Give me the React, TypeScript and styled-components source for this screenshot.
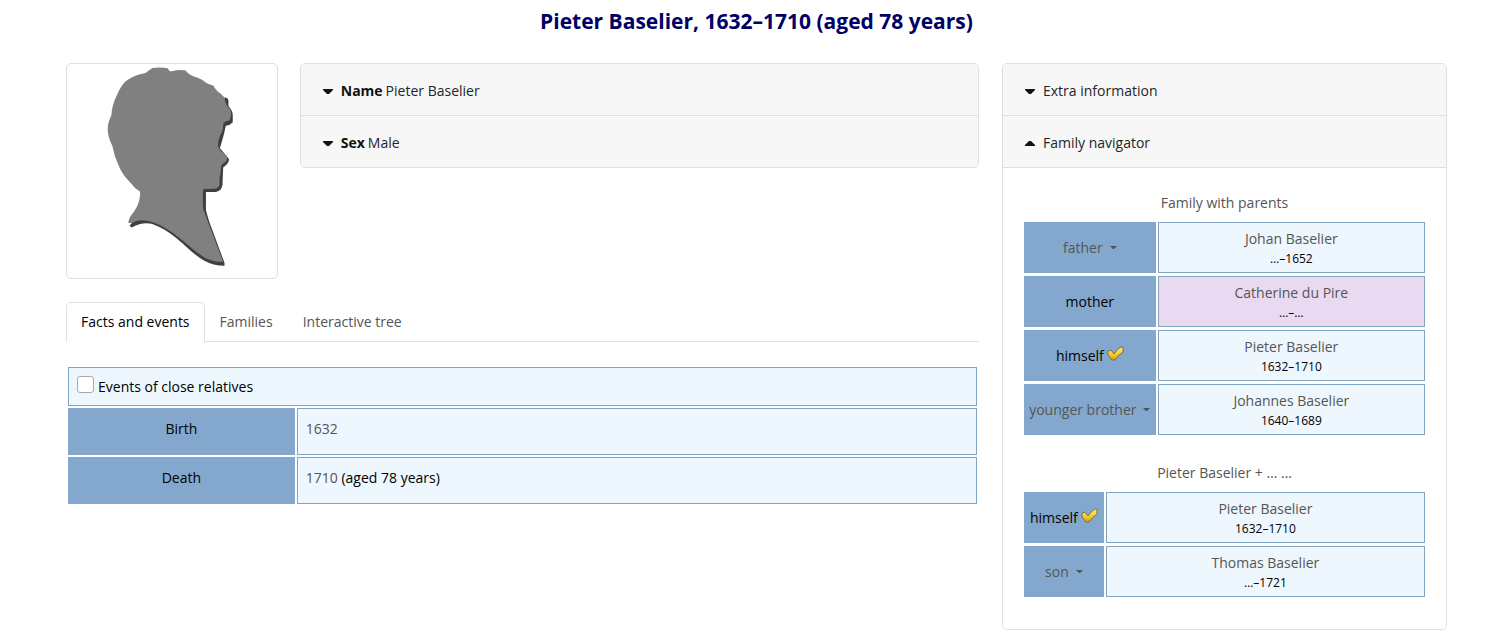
import React, { useState } from "react";
import styled, { createGlobalStyle } from "styled-components";

const GlobalStyle = createGlobalStyle`
  *, *::before, *::after { box-sizing: border-box; }
  body {
    margin: 0;
    background: #fff;
    color: #000;
    font-family: "Open Sans", "Noto Sans", sans-serif;
    font-size: 14px;
    line-height: 22px;
  }
  button, input { font: inherit; }
`;

const Page = styled.main`
  padding: 5px 53px 0 66px;
`;

const Title = styled.h1`
  margin: 0 0 26px;
  color: #000066;
  font-size: 21px;
  font-weight: 700;
  line-height: 32px;
  text-align: center;
`;

const Columns = styled.div`
  display: grid;
  grid-template-columns: repeat(12, minmax(0, 1fr));
  gap: 23px;
  align-items: start;
`;

const MainColumn = styled.div`
  grid-column: span 8;
`;

const Sidebar = styled.aside`
  grid-column: span 4;
`;

const Summary = styled.div`
  display: grid;
  grid-template-columns: repeat(4, minmax(0, 1fr));
  gap: 22px;
  align-items: start;
  margin-bottom: 23px;
`;

const Portrait = styled.div`
  border: 1px solid #dfdfdf;
  border-radius: 5px;

  svg { display: block; width: 100%; }
`;

const Accordion = styled.div`
  grid-column: span 3;
  border: 1px solid #dfdfdf;
  border-radius: 5px;
  overflow: hidden;
`;

const AccordionHeader = styled.h2`
  margin: 0;
  font-size: 14px;
  font-weight: 400;

  & + & { border-top: 1px solid #dfdfdf; }
`;

const AccordionButton = styled.button`
  display: flex;
  align-items: center;
  width: 100%;
  padding: 16px 22px 13px;
  border: 0;
  background: #f7f7f7;
  color: #212529;
  text-align: left;
  line-height: 22px;
  cursor: pointer;

  b { margin-right: 3px; color: #111; }
`;

const Arrow = styled.svg`
  flex: none;
  margin-right: 8px;
`;

const NavigatorBody = styled.div`
  padding: 21px 19px 29px;
  border-top: 1px solid #dfdfdf;
`;

const TabBar = styled.div`
  display: flex;
  border-bottom: 1px solid #dfdfdf;
  margin-bottom: 23px;
`;

const Tab = styled.button<{ $active: boolean }>`
  margin-bottom: -1px;
  padding: 8px 14px;
  border: 1px solid ${(p) => (p.$active ? "#dfdfdf" : "transparent")};
  border-bottom-color: ${(p) => (p.$active ? "#fff" : "transparent")};
  border-radius: 5px 5px 0 0;
  background: ${(p) => (p.$active ? "#fff" : "transparent")};
  color: ${(p) => (p.$active ? "#000" : "#555")};
  cursor: pointer;
`;

const Table = styled.table`
  width: 100%;
  border-collapse: separate;
  border-spacing: 2px;
`;

const PeopleTable = styled(Table)`
  border-spacing: 2px 3px;

  & + & { margin-top: 21px; }
`;

const Caption = styled.caption`
  padding: 3px 0 5px;
  color: #555;
`;

const LabelCell = styled.th<{ $width: string }>`
  width: ${(p) => p.$width};
  padding: 4px;
  border: 1px solid #84a8cd;
  background: #84a8cd;
  font-weight: 400;
  text-align: center;
  white-space: nowrap;
`;

const PersonCell = styled.td<{ $female?: boolean }>`
  padding: 6px 4px 3px;
  border: 1px solid #81a4c0;
  background: ${(p) => (p.$female ? "#e9daf1" : "#edf7fd")};
  text-align: center;
  line-height: 20px;
`;

const FactLabel = styled(LabelCell)`
  height: 47px;
  padding: 9px 8px;
  vertical-align: top;
`;

const FactCell = styled.td`
  padding: 9px 8px;
  border: 1px solid #81a4c0;
  background: #edf7fd;
  vertical-align: top;
`;

const OptionCell = styled(FactCell)`
  padding: 8px;
`;

const Link = styled.a`
  color: #555;
  text-decoration: none;
`;

const Years = styled.div`
  font-size: 12px;
`;

const MenuButton = styled.button`
  display: inline-flex;
  align-items: center;
  gap: 7px;
  padding: 0;
  border: 0;
  background: none;
  color: #555;
  cursor: pointer;
`;

const Self = styled.span`
  display: inline-flex;
  align-items: center;
  gap: 3px;

  svg { margin-bottom: 3px; }
`;

const RelativesLabel = styled.label`
  display: flex;
  align-items: center;
  gap: 4px;
  line-height: 21px;
`;

const Checkbox = styled.input`
  appearance: none;
  width: 17px;
  height: 17px;
  margin: 0 0 4px;
  border: 1px solid #a9a9a9;
  border-radius: 3px;
  background: #fff;

  &:checked { background: #84a8cd; }
`;

function Silhouette() {
  return (
    <svg viewBox="18 27 634 648" role="img" aria-label="Male silhouette">
      <path
        fill="#3f3f3f"
        d="M494 128 Q505 128 506 138 L506 154 Q519 168 519 182 L519 203 Q512 212 498 214 Q493 240 486 262 L480 282 L500 304 L508 316 Q507 328 490 340 L488 392 Q486 410 468 414 L438 414 L438 470 L448 504 L494 628 L494 637 Q460 637 432 621 C380 591 345 534 274 510 Q245 504 214 521 L207 516 L230 490 L420 380 Z"
      />
      <path
        fill="#808080"
        d="M255 54 Q266 46 276 39 Q301 36 322 40 Q326 50 335 49 Q357 42 377 47 Q386 60 400 64 Q428 72 438 84 Q450 90 460 92 Q470 110 482 116 L494 128 Q495 144 502 154 Q513 162 514 172 Q514 192 508 198 Q492 200 490 210 Q490 230 482 240 Q472 260 476 280 Q482 290 500 304 Q504 314 498 322 Q486 328 483 338 Q484 360 479 370 L479 392 Q476 404 462 404 L430 405 Q427 440 430 466 L444 504 L490 625 Q462 626 438 614 C390 588 345 528 278 505 Q238 492 213 508 L203 507 Q206 488 220 474 Q240 446 239 413 Q222 403 212 388 Q184 360 175 336 Q160 305 155 274 Q142 250 141 225 Q141 205 152 182 Q154 150 168 123 Q184 84 204 73 Q228 58 255 54 Z"
      />
    </svg>
  );
}

function Check() {
  return (
    <svg width="17" height="16" viewBox="0 0 17 16" aria-hidden="true">
      <defs>
        <linearGradient id="gold" x1="0" y1="0" x2="0" y2="1">
          <stop offset="0" stopColor="#ffe978" />
          <stop offset="0.6" stopColor="#f6cb26" />
          <stop offset="1" stopColor="#dc9a10" />
        </linearGradient>
      </defs>
      <path
        d="M1 5 L4 4 L7 8 Q10 3 14 1 L16 1 L16 6 Q11 9 8 14 L5 14 Q3 11 1 9 Z"
        fill="url(#gold)"
        stroke="#79704f"
        strokeLinejoin="round"
      />
    </svg>
  );
}

function Triangle({ up }: { up?: boolean }) {
  return (
    <Arrow width="10" height="6" viewBox="0 0 10 6" aria-hidden="true">
      <path d={up ? "M0 6 V5 L4 1 H6 L10 5 V6 Z" : "M0 1 H10 V2 L6 6 H4 L0 2 Z"} fill="#111" />
    </Arrow>
  );
}

function Relation({ kind, label }: { kind: "menu" | "self" | "plain"; label: string }) {
  if (kind === "menu") {
    return (
      <MenuButton type="button" aria-haspopup="menu">
        {label}
        <svg width="7" height="4" viewBox="0 0 7 4" aria-hidden="true">
          <path d="M0 0 H7 L4 3 H3 Z" fill="#4c5257" />
        </svg>
      </MenuButton>
    );
  }
  if (kind === "self") {
    return (
      <Self>
        {label}
        <Check />
      </Self>
    );
  }
  return <>{label}</>;
}

type Person = {
  kind: "menu" | "self" | "plain";
  label: string;
  name: string;
  years: string;
  female?: boolean;
};

const parents: Person[] = [
  { kind: "menu", label: "father", name: "Johan Baselier", years: "…–1652" },
  { kind: "plain", label: "mother", name: "Catherine du Pire", years: "…–…", female: true },
  { kind: "self", label: "himself", name: "Pieter Baselier", years: "1632–1710" },
  { kind: "menu", label: "younger brother", name: "Johannes Baselier", years: "1640–1689" },
];

const ownFamily: Person[] = [
  { kind: "self", label: "himself", name: "Pieter Baselier", years: "1632–1710" },
  { kind: "menu", label: "son", name: "Thomas Baselier", years: "…–1721" },
];

function FamilyTable({ title, people, labelWidth }: { title: string; people: Person[]; labelWidth: string }) {
  return (
    <PeopleTable>
      <Caption>
        <Link href="#family">{title}</Link>
      </Caption>
      <tbody>
        {people.map((p) => (
          <tr key={p.label}>
            <LabelCell scope="row" $width={labelWidth}>
              <Relation kind={p.kind} label={p.label} />
            </LabelCell>
            <PersonCell $female={p.female}>
              <Link href="#individual">{p.name}</Link>
              <Years>{p.years}</Years>
            </PersonCell>
          </tr>
        ))}
      </tbody>
    </PeopleTable>
  );
}

const tabs = ["Facts and events", "Families", "Interactive tree"];

export default function App() {
  const [tab, setTab] = useState(tabs[0]);

  return (
    <Page>
      <GlobalStyle />
      <Title>Pieter Baselier, 1632–1710 (aged 78 years)</Title>
      <Columns>
        <MainColumn>
          <Summary>
            <Portrait>
              <Silhouette />
            </Portrait>
            <Accordion>
              <AccordionHeader>
                <AccordionButton type="button" aria-expanded="false">
                  <Triangle />
                  <b>Name</b>Pieter Baselier
                </AccordionButton>
              </AccordionHeader>
              <AccordionHeader>
                <AccordionButton type="button" aria-expanded="false">
                  <Triangle />
                  <b>Sex</b>Male
                </AccordionButton>
              </AccordionHeader>
            </Accordion>
          </Summary>
          <TabBar role="tablist">
            {tabs.map((t) => (
              <Tab key={t} type="button" role="tab" aria-selected={t === tab} $active={t === tab} onClick={() => setTab(t)}>
                {t}
              </Tab>
            ))}
          </TabBar>
          <Table>
            <tbody>
              <tr>
                <OptionCell colSpan={2}>
                  <RelativesLabel>
                    <Checkbox type="checkbox" />
                    Events of close relatives
                  </RelativesLabel>
                </OptionCell>
              </tr>
              <tr>
                <FactLabel scope="row" $width="25%">Birth</FactLabel>
                <FactCell>
                  <Link href="#1632">1632</Link>
                </FactCell>
              </tr>
              <tr>
                <FactLabel scope="row" $width="25%">Death</FactLabel>
                <FactCell>
                  <Link href="#1710">1710</Link> (aged 78 years)
                </FactCell>
              </tr>
            </tbody>
          </Table>
        </MainColumn>
        <Sidebar>
          <Accordion>
            <AccordionHeader>
              <AccordionButton type="button" aria-expanded="false">
                <Triangle />
                Extra information
              </AccordionButton>
            </AccordionHeader>
            <AccordionHeader>
              <AccordionButton type="button" aria-expanded="true">
                <Triangle up />
                Family navigator
              </AccordionButton>
            </AccordionHeader>
            <NavigatorBody>
              <FamilyTable title="Family with parents" people={parents} labelWidth="33%" />
              <FamilyTable title="Pieter Baselier + … …" people={ownFamily} labelWidth="20%" />
            </NavigatorBody>
          </Accordion>
        </Sidebar>
      </Columns>
    </Page>
  );
}
